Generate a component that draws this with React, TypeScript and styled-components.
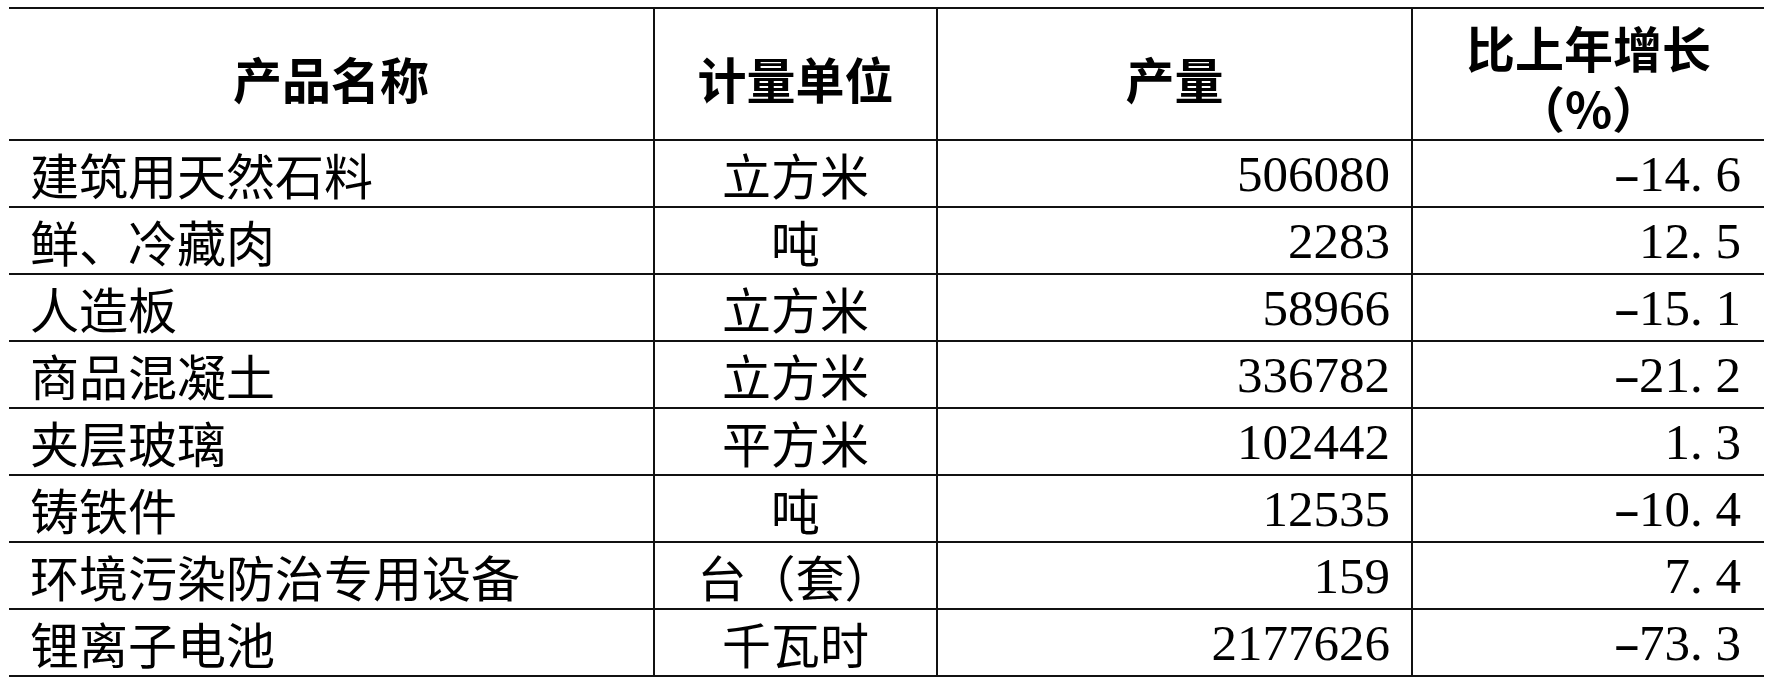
import React from 'react';
import styled, { createGlobalStyle } from 'styled-components';

const GlobalStyle = createGlobalStyle`
  html, body {
    margin: 0;
    padding: 0;
    background: #ffffff;
  }
  body {
    font-family: "Liberation Serif", "Noto Sans CJK SC", serif;
    color: #000000;
  }
`;

const Page = styled.div`
  padding: 7px 0 0 9px;
`;

const Table = styled.div`
  width: 1755px;
  border-top: 2px solid #111;
`;

const Row = styled.div<{ $header?: boolean }>`
  display: grid;
  grid-template-columns: 644px 283px 475px 353px;
  height: ${(p) => (p.$header ? '132px' : '67px')};
  box-sizing: border-box;
  border-bottom: 2px solid #111;
`;

type Align = 'left' | 'center' | 'right';

const Cell = styled.div<{ $align: Align; $divider?: boolean; $pad?: number }>`
  display: flex;
  align-items: center;
  justify-content: ${(p) =>
    p.$align === 'left' ? 'flex-start' : p.$align === 'right' ? 'flex-end' : 'center'};
  box-sizing: border-box;
  border-left: ${(p) => (p.$divider ? '2px solid #111' : 'none')};
  padding-left: ${(p) => (p.$align === 'left' ? `${p.$pad ?? 0}px` : '0')};
  padding-right: ${(p) => (p.$align === 'right' ? `${p.$pad ?? 0}px` : '0')};
  font-size: 49px;
  line-height: 1;
  white-space: nowrap;
`;

const NumCell = styled(Cell)`
  font-size: 51px;
  padding-top: 2px;
`;

const HeadCell = styled(Cell)`
  font-family: "Noto Sans CJK SC", sans-serif;
  font-weight: 700;
  font-size: 49px;
  padding-top: 6px;
`;

const HeadLines = styled.div`
  text-align: center;
  line-height: 60px;
`;

const Name = styled.span`
  font-family: "Noto Sans CJK SC", sans-serif;
`;

// the source font sets "-" and "." on half-width cells, so give them room
const Dash = styled.span`
  display: inline-block;
  width: 0.5em;
  text-align: center;
  transform: scaleX(1.6);
`;

const Dot = styled.span`
  display: inline-block;
  width: 0.5em;
`;

function Figure({ value }: { value: string }) {
  const negative = value.startsWith('-');
  const [whole, frac] = value.replace('-', '').split('.');
  return (
    <span>
      {negative && <Dash>-</Dash>}
      {whole}
      {frac !== undefined && (
        <>
          <Dot>.</Dot>
          {frac}
        </>
      )}
    </span>
  );
}

type Item = { name: string; unit: string; output: string; growth: string };

const items: Item[] = [
  { name: '建筑用天然石料', unit: '立方米', output: '506080', growth: '-14.6' },
  { name: '鲜、冷藏肉', unit: '吨', output: '2283', growth: '12.5' },
  { name: '人造板', unit: '立方米', output: '58966', growth: '-15.1' },
  { name: '商品混凝土', unit: '立方米', output: '336782', growth: '-21.2' },
  { name: '夹层玻璃', unit: '平方米', output: '102442', growth: '1.3' },
  { name: '铸铁件', unit: '吨', output: '12535', growth: '-10.4' },
  { name: '环境污染防治专用设备', unit: '台（套）', output: '159', growth: '7.4' },
  { name: '锂离子电池', unit: '千瓦时', output: '2177626', growth: '-73.3' },
];

export default function App() {
  return (
    <>
      <GlobalStyle />
      <Page>
        <Table>
          <Row $header>
            <HeadCell $align="center">产品名称</HeadCell>
            <HeadCell $align="center" $divider>
              计量单位
            </HeadCell>
            <HeadCell $align="center" $divider>
              产量
            </HeadCell>
            <HeadCell $align="center" $divider>
              <HeadLines>
                比上年增长
                <br />
                （%）
              </HeadLines>
            </HeadCell>
          </Row>
          {items.map((it) => (
            <Row key={it.name}>
              <Cell $align="left" $pad={21}>
                <Name>{it.name}</Name>
              </Cell>
              <Cell $align="center" $divider>
                <Name>{it.unit}</Name>
              </Cell>
              <NumCell $align="right" $divider $pad={21}>
                {it.output}
              </NumCell>
              <NumCell $align="right" $divider $pad={23}>
                <Figure value={it.growth} />
              </NumCell>
            </Row>
          ))}
        </Table>
      </Page>
    </>
  );
}
